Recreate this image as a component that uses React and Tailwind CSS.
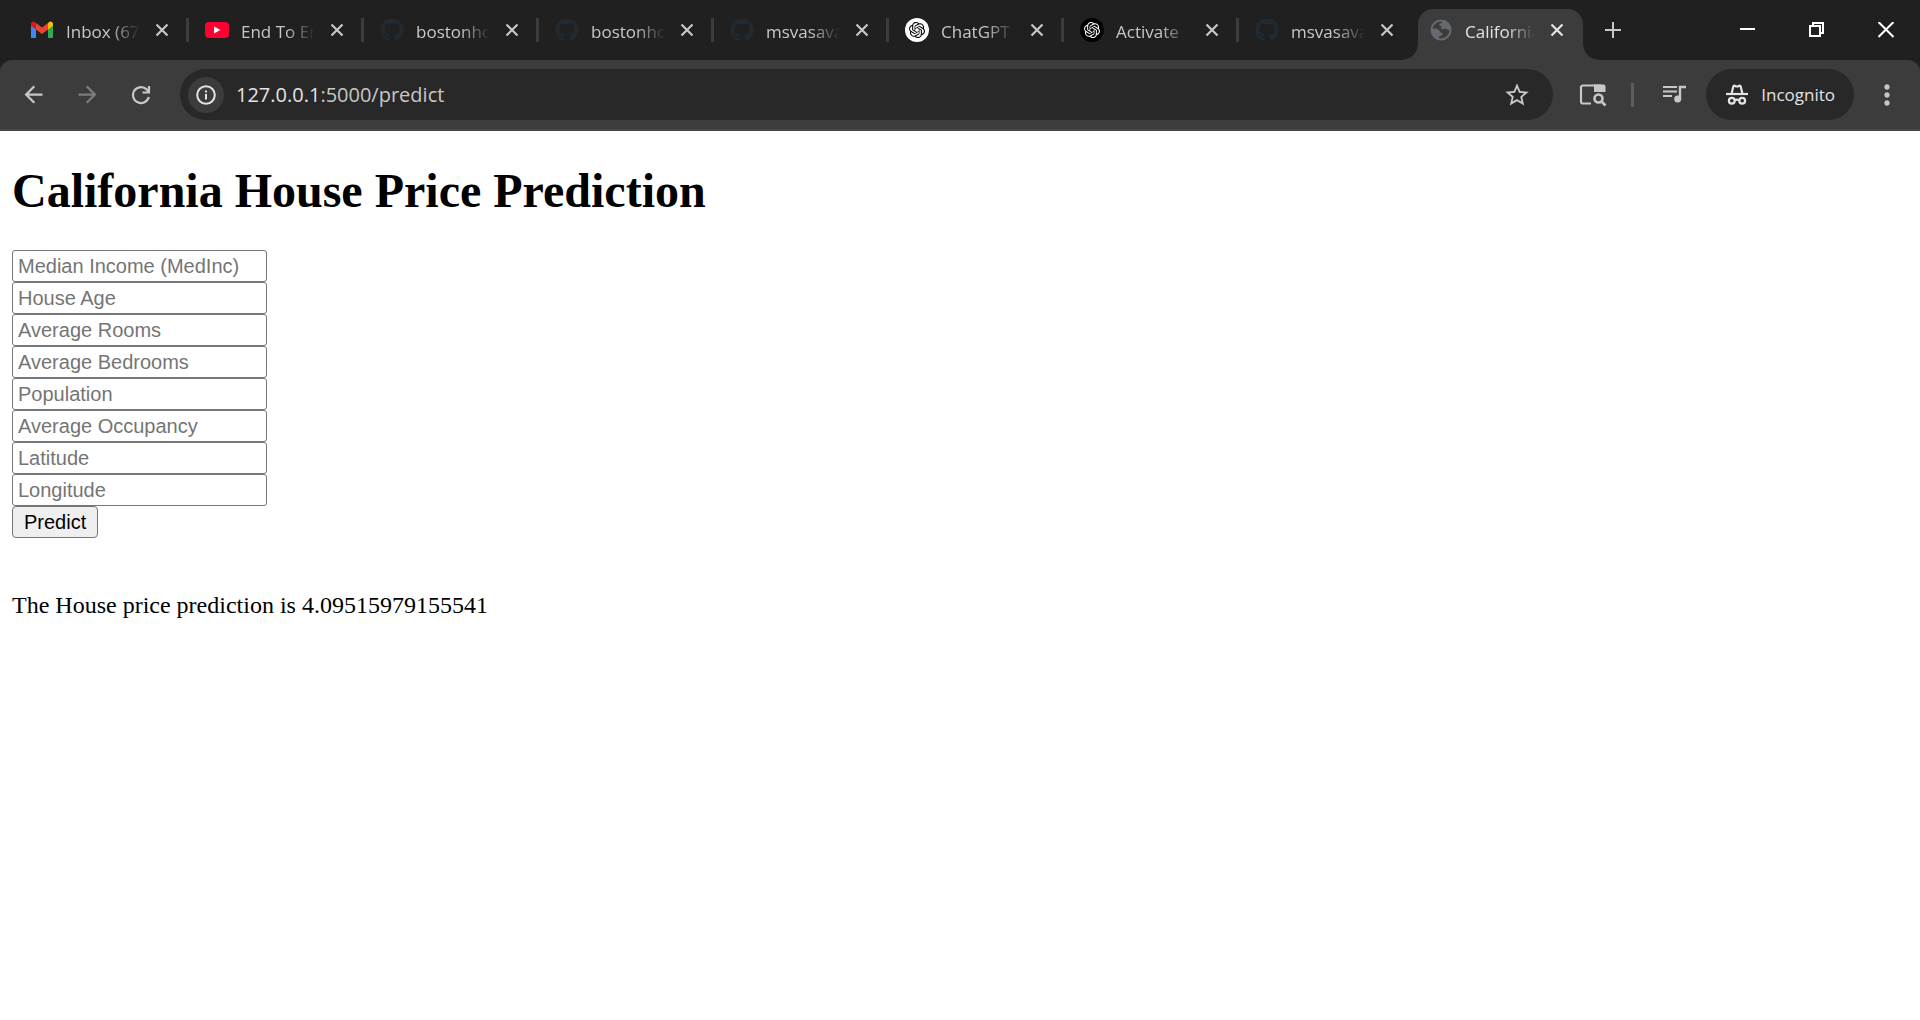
import React from "react";
import {
  MdArrowBack,
  MdArrowForward,
  MdStarBorder,
  MdMoreVert,
} from "react-icons/md";
import { FaGithub } from "react-icons/fa";
import { SiOpenai } from "react-icons/si";

function GmailIcon() {
  return (
    <svg viewBox="0 0 24 24" className="size-6" aria-hidden="true">
      <path d="M1 6v13c0 .600.400 1 1 1h4V10L1 6z" fill="#4285f4" />
      <path d="M18 10v10h4c.600 0 1-.400 1-1V6l-5 4z" fill="#34a853" />
      <path d="M18 5.200V11.500l5-3.800V6c0-2.300-2.500-3.300-4-2z" fill="#fbbc04" />
      <path d="M6 11V5l6 4.600L18 5v6.500l-6 4.600-6-4.600z" fill="#ea4335" />
      <path d="M1 6v1.700l5 3.800V5.200L5 4.200C3.500 2.900 1 3.800 1 6z" fill="#c5221f" />
    </svg>
  );
}

function YoutubeIcon() {
  return (
    <svg viewBox="0 0 24 24" className="size-6" aria-hidden="true">
      <rect x="0" y="4" width="24" height="16" rx="4" fill="#ff0033" />
      <path d="M9 8.500v7l6.500-3.500z" fill="#fff" />
    </svg>
  );
}

function GithubIcon() {
  return <FaGithub className="size-6 text-[#212a31]" aria-hidden="true" />;
}

function ChatIcon() {
  return (
    <span className="flex size-6 items-center justify-center rounded-full bg-white text-black">
      <SiOpenai className="size-4" aria-hidden="true" />
    </span>
  );
}

function ChatDarkIcon() {
  return (
    <span className="flex size-6 items-center justify-center rounded-full bg-black text-white">
      <SiOpenai className="size-4" aria-hidden="true" />
    </span>
  );
}

function GlobeIcon() {
  return (
    <svg viewBox="0 0 24 24" className="size-6 text-[#656a70]" fill="currentColor" aria-hidden="true">
      <circle cx="12" cy="12" r="9.500" fill="none" stroke="currentColor" strokeWidth="2" />
      <path d="M13.500 2.500C14 4 12.500 5 11 5.500c-1.500.600-.500 2 .500 2.500 1.500.800 0 2.500 1.500 3 1.500.500 3-.500 4.500 0 1.500.600 2 1.500 4 1.500C22 7 18.500 3 13.500 2.500z" />
      <path d="M2 11c3-1 6.500-.500 8 1 1 1 .500 2 2 2.500 1.500.400 2 1.500 1 2.500s-2.500.500-3 2c-.300 1 0 2 .500 3C5.500 21.500 2 17 2 11z" />
    </svg>
  );
}

function CrossIcon() {
  return (
    <svg viewBox="0 0 14 14" className="size-3.5" fill="none" stroke="currentColor" strokeWidth="2.2" aria-hidden="true">
      <path d="M1.500 1.500l11 11M12.500 1.500l-11 11" />
    </svg>
  );
}

function ReloadIcon() {
  return (
    <svg viewBox="0 0 20 20" className="size-5" fill="none" stroke="currentColor" strokeWidth="2.200" aria-hidden="true">
      <path d="M17.800 12A8 8 0 1 1 15.700 4.400L18 7" />
      <path d="M18 1v6.500h-6.500" />
    </svg>
  );
}

function TabSearchIcon() {
  return (
    <svg viewBox="0 0 28 24" className="h-6 w-7" fill="none" stroke="currentColor" aria-hidden="true">
      <path d="M12 20.500H4a2 2 0 0 1-2-2V4.500a2 2 0 0 1 2-2h18" strokeWidth="2.200" />
      <path d="M15 1.500h9.500a2 2 0 0 1 2 2v5.500H15z" fill="currentColor" stroke="none" />
      <circle cx="19.500" cy="15.500" r="4" strokeWidth="2.600" />
      <path d="M22.500 18.500l4 4" strokeWidth="2.600" />
    </svg>
  );
}

function MediaIcon() {
  return (
    <svg viewBox="0 0 24 24" className="size-6" fill="none" stroke="currentColor" strokeWidth="2" aria-hidden="true">
      <path d="M1 4h14M1 8.500h14M1 13h9" />
      <path d="M18 16V4h6" strokeWidth="2.400" />
      <circle cx="15.700" cy="16" r="3.500" fill="currentColor" stroke="none" />
    </svg>
  );
}

function IncognitoIcon() {
  return (
    <svg viewBox="0 0 24 24" className="size-6" fill="none" stroke="currentColor" strokeWidth="2.200" aria-hidden="true">
      <path d="M1 11h22" />
      <path d="M6.500 11l1.800-7.500c.200-.900.900-1.100 1.600-.700.700.500 1.300.700 2.100.700s1.400-.200 2.100-.700c.700-.400 1.400-.200 1.600.700L17.500 11" />
      <circle cx="6.800" cy="17.700" r="2.900" />
      <circle cx="17.200" cy="17.700" r="2.900" />
      <path d="M9.700 17.200c1.400-.800 3.200-.800 4.600 0" />
    </svg>
  );
}

const tabs = [
  { title: "Inbox (67", Icon: GmailIcon, divider: true },
  { title: "End To En", Icon: YoutubeIcon, divider: true },
  { title: "bostonho", Icon: GithubIcon, divider: true },
  { title: "bostonho", Icon: GithubIcon, divider: true },
  { title: "msvasava", Icon: GithubIcon, divider: true },
  { title: "ChatGPT", Icon: ChatIcon, divider: true },
  { title: "Activate", Icon: ChatDarkIcon, divider: true },
  { title: "msvasava", Icon: GithubIcon, divider: false },
];

function TabBody({ title, Icon, active }) {
  return (
    <>
      <span className="shrink-0">
        <Icon />
      </span>
      <span
        className={
          "ml-3 shrink-0 overflow-hidden whitespace-nowrap pt-1 text-[17px] leading-6 [mask-image:linear-gradient(to_right,black_60%,transparent)] " +
          (active ? "w-[70px] text-[#e3e3e3]" : "w-[74px] text-[#c7c7c7]")
        }
      >
        {title}
      </span>
      <button
        type="button"
        aria-label={"Close " + title}
        className={"ml-2.5 flex size-6 shrink-0 items-center justify-center " + (active ? "text-[#e3e3e3]" : "text-[#c7c7c7]")}
      >
        <CrossIcon />
      </button>
    </>
  );
}

function TitleBar() {
  return (
    <header className="flex h-[60px] bg-[#202020] pl-3.5">
      <div className="flex min-w-0" role="tablist">
        {tabs.map((tab, i) => (
          <div key={i} role="tab" aria-selected="false" className="flex w-[175px] items-center pl-4">
            <TabBody {...tab} />
            {tab.divider && <span className="ml-auto h-6 w-[3px] shrink-0 bg-[#3c3c3c]" />}
          </div>
        ))}
        <div
          role="tab"
          aria-selected="true"
          className="relative ml-1 mt-[9px] flex w-[165px] items-center rounded-t-[15px] bg-[#3c3c3c] pb-[9px] pl-[11px]"
        >
          <TabBody title="California" Icon={GlobeIcon} active />
          <span className="absolute bottom-0 right-full size-[15px] bg-[radial-gradient(circle_at_top_left,#202020_14px,#3c3c3c_15px)]" />
          <span className="absolute bottom-0 left-full size-[15px] bg-[radial-gradient(circle_at_top_right,#202020_14px,#3c3c3c_15px)]" />
        </div>
        <button type="button" aria-label="New tab" className="flex w-[60px] items-center justify-center text-[#c7c7c7]">
          <svg viewBox="0 0 16 16" className="size-4" fill="none" stroke="currentColor" strokeWidth="2" aria-hidden="true">
            <path d="M8 0v16M0 8h16" />
          </svg>
        </button>
      </div>
      <div className="ml-auto flex text-white">
        <button type="button" aria-label="Minimize" className="flex w-[69px] items-center justify-center">
          <svg viewBox="0 0 16 16" className="size-4" aria-hidden="true">
            <path d="M0 6h15v2H0z" fill="currentColor" />
          </svg>
        </button>
        <button type="button" aria-label="Restore" className="flex w-[69px] items-center justify-center">
          <svg viewBox="0 0 16 16" className="size-4" fill="none" stroke="currentColor" strokeWidth="2" aria-hidden="true">
            <path d="M1 4h10v10H1zM4 4V1h10v10h-3" />
          </svg>
        </button>
        <button type="button" aria-label="Close window" className="flex w-[69px] items-center justify-center">
          <svg viewBox="0 0 16 16" className="size-4" fill="none" stroke="currentColor" strokeWidth="2" aria-hidden="true">
            <path d="M0.500 0l15 15M15.500 0l-15 15" />
          </svg>
        </button>
      </div>
    </header>
  );
}

function Toolbar() {
  return (
    <div className="bg-[#202020]">
      <div className="flex h-[71px] items-center rounded-t-xl border-b-2 border-[#474747] bg-[#3c3c3c] pl-1.5 text-[#c7c7c7]">
        <button type="button" aria-label="Back" className="flex w-[54px] justify-center">
          <MdArrowBack className="size-[27px]" />
        </button>
        <button type="button" aria-label="Forward" className="flex w-[54px] justify-center text-[#7c7c7c]">
          <MdArrowForward className="size-[27px]" />
        </button>
        <button type="button" aria-label="Reload" className="flex w-[54px] justify-center">
          <ReloadIcon />
        </button>
        <div className="ml-3 flex h-[51px] min-w-0 flex-1 items-center rounded-full bg-[#282828] pl-2 pr-[22px]">
          <button
            type="button"
            aria-label="Site information"
            className="flex size-9 shrink-0 items-center justify-center rounded-full bg-[#3c3c3c] text-[#e3e3e3]"
          >
            <svg viewBox="0 0 20 20" className="size-5" fill="none" stroke="currentColor" strokeWidth="2" aria-hidden="true">
              <circle cx="10" cy="10" r="8.800" />
              <path d="M10 9v5.500M10 5.500v2" />
            </svg>
          </button>
          <div className="ml-3 flex-1 text-xl leading-7 text-[#c7c7c7]">
            <span className="text-[#e3e3e3]">127.0.0.1</span>:5000/predict
          </div>
          <button type="button" aria-label="Bookmark this page">
            <MdStarBorder className="size-7" />
          </button>
        </div>
        <button type="button" aria-label="Search tabs" className="ml-[26px]">
          <TabSearchIcon />
        </button>
        <span className="ml-6 h-6 w-[3px] bg-[#5c5c5c]" />
        <button type="button" aria-label="Media controls" className="ml-7">
          <MediaIcon />
        </button>
        <button
          type="button"
          className="ml-5 flex h-[51px] items-center gap-3 rounded-full bg-[#282828] px-[19px] text-[17px] leading-6 text-[#e3e3e3]"
        >
          <IncognitoIcon />
          Incognito
        </button>
        <button type="button" aria-label="Menu" className="flex w-[66px] justify-center">
          <MdMoreVert className="size-8" />
        </button>
      </div>
    </div>
  );
}

const fields = [
  { name: "MedInc", placeholder: "Median Income (MedInc)" },
  { name: "HouseAge", placeholder: "House Age" },
  { name: "AveRooms", placeholder: "Average Rooms" },
  { name: "AveBedrms", placeholder: "Average Bedrooms" },
  { name: "Population", placeholder: "Population" },
  { name: "AveOccup", placeholder: "Average Occupancy" },
  { name: "Latitude", placeholder: "Latitude" },
  { name: "Longitude", placeholder: "Longitude" },
];

function PredictionPage() {
  return (
    <main className="px-3 pt-8 font-['Liberation_Serif',serif] text-2xl text-black">
      <h1 className="text-5xl font-bold leading-[56px]">California House Price Prediction</h1>
      <form
        className="mt-[31px] flex flex-col items-start font-['Liberation_Sans',sans-serif] text-xl"
        onSubmit={(e) => e.preventDefault()}
      >
        {fields.map((f) => (
          <input
            key={f.name}
            type="text"
            name={f.name}
            aria-label={f.placeholder}
            placeholder={f.placeholder}
            className="h-8 w-[255px] rounded-[3px] border border-[#767676] bg-white px-[5px] placeholder:text-[#757575]"
          />
        ))}
        <button type="submit" className="h-8 rounded-[4px] border border-[#767676] bg-[#efefef] px-[11px] leading-7">
          Predict
        </button>
      </form>
      <p className="mt-[53px] leading-7">The House price prediction is 4.09515979155541</p>
    </main>
  );
}

export default function App() {
  return (
    <div className="min-h-screen bg-white font-['Open_Sans',sans-serif]">
      <TitleBar />
      <Toolbar />
      <PredictionPage />
    </div>
  );
}
